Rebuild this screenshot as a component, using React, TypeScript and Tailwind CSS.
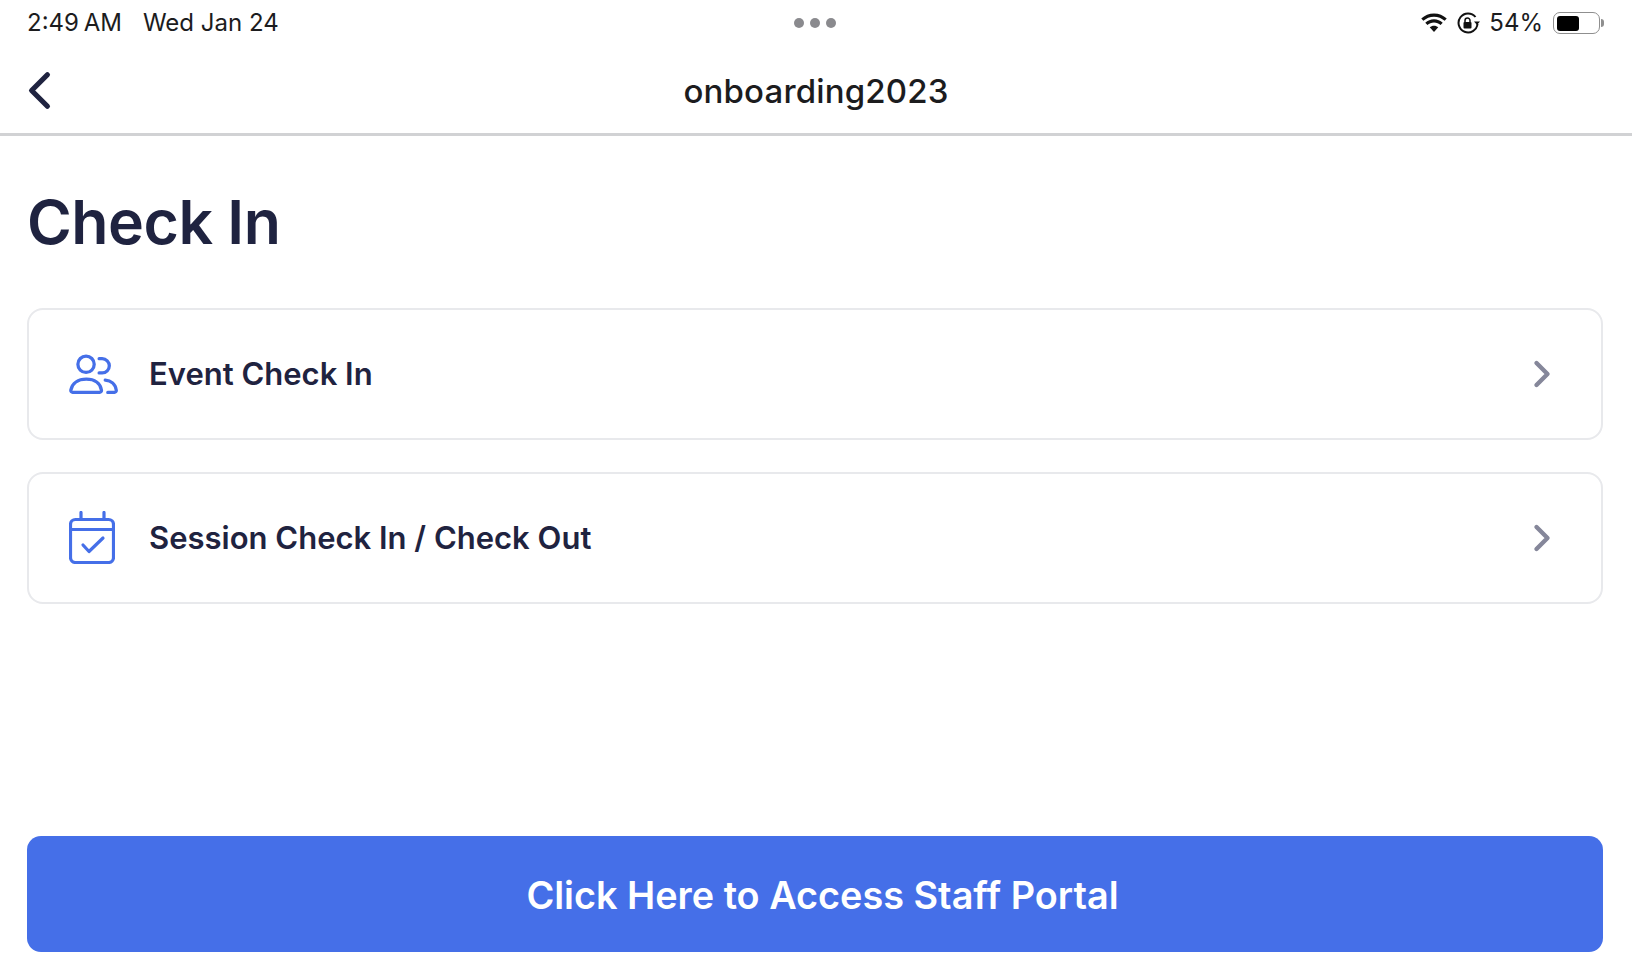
import { ChevronLeft, ChevronRight } from 'lucide-react';

const UsersIcon = () => (
  <svg width="49" height="40" viewBox="0 0 48 39" fill="none" stroke="#456FE8" strokeWidth="3.200" strokeLinecap="round" strokeLinejoin="round">
    <circle cx="16.700" cy="10" r="8" />
    <path d="M3.800 37.500h26c1.300 0 2.200-.9 2-2.200C30.800 28.500 25 24.500 17 24.500S3 28.500 1.800 35.300c-.2 1.300.7 2.200 2 2.200z" />
    <path d="M29.500 4.500h3a7 7 0 0 1 0 14h-3" />
    <path d="M35.500 25.500c5.500.5 10 4 10.800 9.800.2 1.300-.7 2.200-2 2.200H38" />
  </svg>
);

const CalendarIcon = () => (
  <svg width="46" height="53" viewBox="0 0 46 53" fill="none" stroke="#456FE8" strokeWidth="3.200" strokeLinecap="round" strokeLinejoin="round" className="-mt-[2px]">
    <rect x="1.500" y="8.500" width="43" height="43" rx="5" />
    <path d="M1.500 18.500h43M12 1.500V8M35 1.500V8" />
    <path d="M14 34l6 6.500L34 27" />
  </svg>
);

const Row = ({ icon, label }: { icon: React.ReactNode; label: string }) => (
  <div className="flex h-[132px] items-center rounded-2xl border-2 border-[#E8E9EC] bg-white pl-[40px] pr-[37px]">
    <div className="flex w-[80px] items-center">{icon}</div>
    <span className="flex-1 text-[31px] font-[580] text-[#1F2340]">{label}</span>
    <ChevronRight size={44} strokeWidth={2.4} className="text-[#85879A]" />
  </div>
);

export default function App() {
  return (
    <div className="flex h-[973px] w-[1632px] flex-col overflow-hidden bg-white font-['Inter',sans-serif]">
      <div className="relative flex h-[46px] items-center justify-between pl-[27px] pr-[28px] text-[24px] text-[#1c1c1e]">
        <div className="flex gap-[21px]">
          <span className="[word-spacing:-2px]">2:49 AM</span>
          <span>Wed Jan 24</span>
        </div>
        <div className="absolute left-[794px] top-[18px] flex gap-[6px]">
          <span className="h-[10px] w-[10px] rounded-full bg-[#8A8A8E]" />
          <span className="h-[10px] w-[10px] rounded-full bg-[#8A8A8E]" />
          <span className="h-[10px] w-[10px] rounded-full bg-[#8A8A8E]" />
        </div>
        <div className="flex items-center gap-[9px]">
          <svg width="28" height="20" viewBox="0 0 30 22" fill="#111">
            <path d="M15 4c4.500 0 8.600 1.700 11.700 4.500L29 6C25.300 2.500 20.400.5 15 .5S4.700 2.500 1 6l2.300 2.500C6.400 5.700 10.500 4 15 4z" />
            <path d="M15 10.500c2.800 0 5.300 1 7.200 2.800l2.400-2.500C22 8.400 18.700 7 15 7s-7 1.400-9.600 3.800l2.400 2.500c1.900-1.800 4.400-2.800 7.200-2.800z" />
            <path d="M15 14c-1.800 0-3.500.7-4.700 1.800L15 21l4.700-5.200C18.500 14.700 16.800 14 15 14z" />
          </svg>
          <svg width="23" height="22" viewBox="0 0 23 22" fill="none" stroke="#111" strokeWidth="2">
            <path d="M18.500 5A9.500 9.500 0 1 0 20.500 12" />
            <path d="M23 9.500h-6l3 3.500z" fill="#111" stroke="none" />
            <rect x="6.500" y="10" width="8" height="6.500" rx="1" fill="#111" stroke="none" />
            <path d="M8 10V8.500a2.500 2.500 0 0 1 5 0V10" strokeWidth="1.500" />
          </svg>
          <span>54%</span>
          <div className="ml-[1px] flex items-center">
            <div className="h-[22px] w-[47px] rounded-[7px] border-[1.5px] border-[#8F8F8F] p-[2.500px]">
              <div className="h-full w-[22px] rounded-[3px] bg-black" />
            </div>
            <div className="ml-[1px] h-[8px] w-[3px] rounded-r bg-[#8F8F8F]" />
          </div>
        </div>
      </div>

      <div className="relative flex h-[90px] items-center justify-center border-b-[3px] border-[#D1D2D4] pt-[4px]">
        <ChevronLeft size={63} strokeWidth={2} className="absolute left-[8px] top-[13px] text-[#1F2340]" />
        <span className="text-[33px] font-[550] tracking-[0.15px] text-[#1c1c1e]">onboarding2023</span>
      </div>

      <div className="flex flex-1 flex-col pl-[27px] pr-[29px]">
        <h1 className="mt-[50px] text-[60.800px] font-semibold leading-[72px] tracking-[-0.5px] text-[#1F2340]">Check In</h1>
        <div className="mt-[50px] flex flex-col gap-[32px]">
          <Row icon={<UsersIcon />} label="Event Check In" />
          <Row icon={<CalendarIcon />} label="Session Check In / Check Out" />
        </div>
        <div className="mb-[21px] mt-auto flex h-[116px] items-center justify-center rounded-[14px] bg-[#456FE8] pl-[15px] pt-[2px] text-[37.800px] font-[580] text-white">
          Click Here to Access Staff Portal
        </div>
      </div>
    </div>
  );
}
